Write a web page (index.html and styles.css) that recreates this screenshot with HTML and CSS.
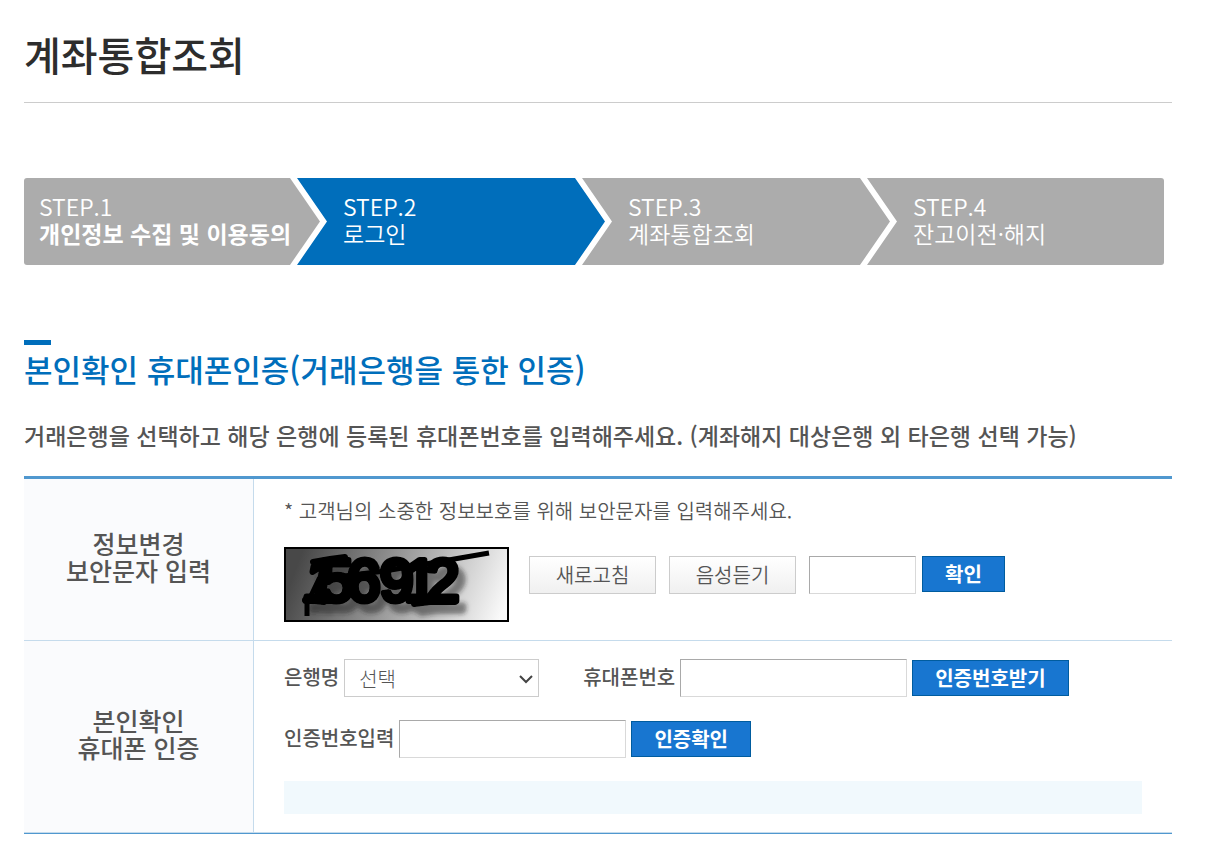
FILE: index.html
```html
<!DOCTYPE html>
<html lang="ko">
<head>
  <meta charset="UTF-8">
  <meta name="viewport" content="width=device-width, initial-scale=1">
  <title>계좌통합조회</title>
  <link rel="stylesheet" href="styles.css">
</head>
<body>

  <main class="content">
    <h1 class="page-title">계좌통합조회</h1>

    <ol class="steps">
      <li class="step first">STEP.1<br><strong>개인정보 수집 및 이용동의</strong></li>
      <li class="step on" aria-current="step">STEP.2<br>로그인</li>
      <li class="step">STEP.3<br>계좌통합조회</li>
      <li class="step last">STEP.4<br>잔고이전·해지</li>
    </ol>

    <h2 class="section-title">본인확인 휴대폰인증(거래은행을 통한 인증)</h2>
    <p class="desc">거래은행을 선택하고 해당 은행에 등록된 휴대폰번호를 입력해주세요. (계좌해지 대상은행 외 타은행 선택 가능)</p>

    <form>
      <table class="form-table">
        <tbody>
          <tr>
            <th scope="row"><label for="captcha">정보변경<br>보안문자 입력</label></th>
            <td>
              <p class="note">* 고객님의 소중한 정보보호를 위해 보안문자를 입력해주세요.</p>
              <div class="captcha-row">
                <svg class="captcha" width="225" height="75" viewBox="0 0 225 75" role="img" aria-label="보안문자">
                  <defs>
                    <linearGradient id="paper" gradientUnits="userSpaceOnUse" x1="20" y1="0" x2="215" y2="75">
                      <stop offset="0" stop-color="#484848"/>
                      <stop offset="1" stop-color="#fafafa"/>
                    </linearGradient>
                    <filter id="soft" x="-10%" y="-20%" width="130%" height="150%">
                      <feDropShadow dx="7" dy="9" stdDeviation="2" flood-color="#222" flood-opacity="0.5"/>
                    </filter>
                  </defs>
                  <rect x="1" y="1" width="223" height="73" fill="url(#paper)" stroke="#000" stroke-width="2"/>
                  <g filter="url(#soft)">
                    <text class="captcha-text" y="54"><tspan class="slanted" x="20">1</tspan><tspan x="36 63 96 120 142">56912</tspan></text>
                    <path d="M29 15 L46 12 L61 10 M21 53 L40 55 M130 57 L146 55 H171" fill="none" stroke="#000" stroke-width="6" stroke-linecap="round"/>
                  </g>
                  <path d="M23 69 V57 L35 32 L101 24 L205 6" fill="none" stroke="#000" stroke-width="5"/>
                </svg>
                <div class="captcha-controls">
                  <button type="button" class="btn-line">새로고침</button>
                  <button type="button" class="btn-line">음성듣기</button>
                  <span class="pair">
                    <input type="text" id="captcha" class="text short">
                    <button type="button" class="btn-blue">확인</button>
                  </span>
                </div>
              </div>
            </td>
          </tr>
          <tr>
            <th scope="row">본인확인<br>휴대폰 인증</th>
            <td>
              <div class="field-row">
                <label for="bank">은행명</label>
                <span class="select-wrap">
                  <select id="bank">
                    <option>선택</option>
                  </select>
                  <svg class="arrow" width="14" height="10" viewBox="0 0 14 10" aria-hidden="true">
                    <path d="M1 2 L7 8 L13 2" fill="none" stroke="#444" stroke-width="2"/>
                  </svg>
                </span>
                <label for="phone" class="phone-label">휴대폰번호</label>
                <input type="tel" id="phone" class="text">
                <button type="button" class="btn-blue">인증번호받기</button>
              </div>
              <div class="field-row">
                <label for="code">인증번호입력</label>
                <input type="text" id="code" class="text">
                <button type="button" class="btn-blue">인증확인</button>
              </div>
              <div class="message"></div>
            </td>
          </tr>
        </tbody>
      </table>
    </form>
  </main>

</body>
</html>
```
FILE: styles.css
```css
* {
  box-sizing: border-box;
}

body {
  margin: 0;
  background: #fff;
  color: #555;
  font-family: "Noto Sans CJK KR", sans-serif;
  font-size: 20px;
}

.content {
  padding: 24px 34px 19px 24px;
}

.page-title {
  margin: 0 0 75px;
  padding-bottom: 18px;
  border-bottom: 1px solid #ccc;
  color: #2d2d2d;
  font-size: 40px;
  font-weight: 500;
  line-height: 60px;
}

/* step bar */
.steps {
  display: grid;
  grid-template-columns: 273fr 285fr 285fr 297fr;
  margin: 0 8px 75px 0;
  padding: 0;
  list-style: none;
}

/* each arrow tip reaches into the notch of the next step */
.step {
  min-width: 0;
  margin-right: -23px;
  padding: 15px 0 18px 46px;
  background: #acacac;
  color: #fff;
  font-size: 23px;
  font-weight: 350;
  line-height: 27px;
  white-space: nowrap;
  clip-path: polygon(0 0, calc(100% - 30px) 0, 100% 50%, calc(100% - 30px) 100%, 0 100%, 30px 50%);
}

.step strong {
  font-weight: 700;
}

.step.first {
  padding-left: 15px;
  border-radius: 3px 0 0 3px;
  clip-path: polygon(0 0, calc(100% - 30px) 0, 100% 50%, calc(100% - 30px) 100%, 0 100%);
}

.step.last {
  margin-right: 0;
  border-radius: 0 3px 3px 0;
  clip-path: polygon(0 0, 100% 0, 100% 100%, 0 100%, 30px 50%);
}

.step.on {
  background: #006ebb;
}

/* section heading */
.section-title {
  margin: 0 0 26px;
  color: #006ebb;
  font-size: 31px;
  font-weight: 500;
  line-height: 48px;
}

.section-title::before {
  content: "";
  display: block;
  width: 27px;
  height: 5px;
  background: #006ebb;
}

.desc {
  margin: 0 0 25px;
  font-size: 23px;
  font-weight: 500;
  line-height: 32px;
}

/* form table */
.form-table {
  width: 100%;
  border-collapse: separate;
  border-spacing: 0;
  border-top: 3px solid #5098cf;
  border-bottom: 1px solid #5098cf;
}

.form-table th {
  width: 230px;
  padding: 0 0 6px;
  border-right: 1px solid #c5dbec;
  border-bottom: 1px solid #c5dbec;
  background: #fafbfd;
  font-size: 25px;
  font-weight: 500;
  line-height: 27px;
}

.form-table td {
  padding: 18px 30px;
  border-bottom: 1px solid #c5dbec;
}

.note {
  margin: 0 0 22px;
  font-weight: 350;
  line-height: 28px;
}

.captcha-row,
.captcha-controls,
.field-row,
.pair {
  display: flex;
}

.captcha-row {
  gap: 20px;
}

.captcha-controls {
  gap: 13px;
  padding-top: 9px;
}

.captcha {
  display: block;
}

.captcha-text {
  font-family: "Liberation Sans", sans-serif;
  font-size: 60px;
  fill: #000;
  stroke: #000;
  stroke-width: 6px;
  stroke-linejoin: round;
}

.slanted {
  font-style: italic;
}

.pair {
  gap: 6px;
}

button,
input,
select {
  margin: 0;
  border-radius: 0;
  color: #555;
  font-family: inherit;
  font-size: 20px;
}

.btn-line {
  min-width: 127px;
  height: 38px;
  padding: 0 24px;
  border: 1px solid #ccc;
  background: linear-gradient(#fff, #f0f0f0);
  font-weight: 350;
  line-height: 34px;
}

.btn-blue {
  height: 36px;
  padding: 0 22px;
  border: 1px solid #005c9f;
  background: #1876d0;
  color: #fff;
  font-weight: 700;
  line-height: 34px;
}

.text {
  width: 227px;
  height: 38px;
  padding: 0 8px;
  border: 1px solid;
  border-color: #a9a9a9 #d9d9d9 #d9d9d9 #a9a9a9;
}

.text.short {
  width: 107px;
}

.field-row {
  align-items: center;
  gap: 5px;
  margin-bottom: 23px;
}

.field-row label {
  padding-bottom: 2px;
  font-weight: 500;
  line-height: 36px;
}

.field-row .phone-label {
  margin-left: 39px;
}

.select-wrap {
  position: relative;
}

.select-wrap select {
  display: block;
  width: 195px;
  height: 38px;
  padding: 0 30px 0 14px;
  border: 1px solid #ccc;
  background: #fff;
  font-weight: 300;
  appearance: none;
}

.arrow {
  position: absolute;
  top: 15px;
  right: 6px;
  pointer-events: none;
}

.message {
  min-height: 33px;
  background: #f1f9fd;
}
```
